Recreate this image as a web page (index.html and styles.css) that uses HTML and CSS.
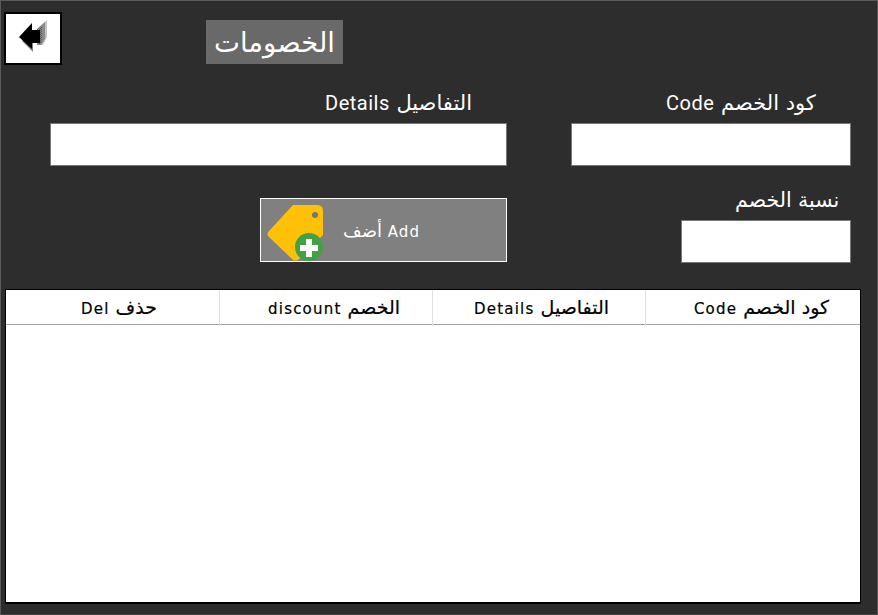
FILE: index.html
```html
<!DOCTYPE html>
<html lang="ar">
<head>
<meta charset="utf-8">
<title>الخصومات</title>
<link rel="stylesheet" href="styles.css">
</head>
<body>
<div class="page">
  <header class="topbar">
    <button class="back" aria-label="back">
      <svg width="34" height="36" viewBox="0 0 34 36">
        <defs>
          <pattern id="dots" width="2" height="2" patternUnits="userSpaceOnUse">
            <rect width="1" height="1" fill="#555"/>
            <rect x="1" y="1" width="1" height="1" fill="#555"/>
          </pattern>
        </defs>
        <polygon points="28,3 28,20 24,28 20,28 20,10" fill="#c4c4c4"/>
        <polygon points="26,5 26,22 22,28 18,28 18,12" fill="#8a8a8a"/>
        <polygon points="23,9 23,25 20,28 16,14" fill="url(#dots)"/>
        <polygon points="3,24 14,13 14,35" fill="#808080"/>
        <polygon points="0,20 13,6 13,13 21,13 21,26 13,26 13,32" fill="#000"/>
      </svg>
    </button>
    <h1 class="title">الخصومات</h1>
  </header>

  <section class="form">
    <div class="field field-details">
      <label class="label label-details">التفاصيل <span class="lat">Details</span></label>
      <input class="input" type="text">
    </div>
    <div class="field field-code">
      <label class="label label-code">كود الخصم <span class="lat">Code</span></label>
      <input class="input" type="text">
    </div>
    <button class="add">
      <svg class="tag" width="64" height="62" viewBox="0 0 64 62">
        <path d="M32 6 H56 Q62 6 62 12 V36 L37 61 Q34 63 31 60 L8 38 Q5 35 8 32 Z" fill="#ffc107"/>
        <circle cx="54" cy="16" r="3" fill="#757575"/>
        <circle cx="48" cy="48" r="14" fill="#43a047"/>
        <path d="M45 40 H51 V46 H57 V52 H51 V58 H45 V52 H39 V46 H45 Z" fill="#fff"/>
      </svg>
      <span class="add-text" dir="rtl"><span class="add-lat">Add</span> أضف</span>
    </button>
    <div class="field field-discount">
      <label class="label label-discount">نسبة الخصم</label>
      <input class="input" type="text">
    </div>
  </section>

  <section class="table">
    <div class="thead">
      <div class="th">حذف <span class="th-lat">Del</span></div>
      <div class="th">الخصم <span class="th-lat">discount</span></div>
      <div class="th">التفاصيل <span class="th-lat">Details</span></div>
      <div class="th">كود الخصم <span class="th-lat">Code</span></div>
    </div>
  </section>
</div>
</body>
</html>
```

FILE: styles.css
```css
* { box-sizing: border-box; }
html, body { margin: 0; padding: 0; }
body {
  width: 878px;
  height: 615px;
  overflow: hidden;
  font-family: "DejaVu Sans", "Liberation Sans", sans-serif;
}
.page {
  width: 878px;
  height: 615px;
  background: #2d2d2d;
  border: 1px solid #5a5a5a;
  border-bottom-color: #444;
  padding: 11px 17px 0 3px;
  display: flex;
  flex-direction: column;
}
.topbar {
  display: flex;
  align-items: flex-start;
  height: 58px;
}
.back {
  width: 58px;
  height: 53px;
  padding: 3px 0 0 13px;
  background: #fff;
  border: 2px solid #000;
  display: flex;
  align-items: flex-start;
}
.title {
  margin: 8px 0 0 144px;
  width: 137px;
  height: 44px;
  background: #696969;
  color: #fff;
  font-size: 27.5px;
  font-weight: 400;
  line-height: 44px;
  text-align: center;
}
.form {
  display: grid;
  grid-template-columns: 457px 280px;
  grid-template-rows: 128px 66px;
  column-gap: 64px;
  margin-left: 46px;
}
.field {
  display: flex;
  flex-direction: column;
  align-items: flex-start;
}
.label {
  direction: rtl;
  color: #fff;
  font-size: 21px;
  line-height: 28px;
  height: 34px;
}
.lat { font-family: Roboto, sans-serif; font-size: 20px; font-weight: 400; letter-spacing: 0.5px; }
.label-details { margin: 19px 0 0 275px; }
.label-code { margin: 19px 0 0 95px; }
.input {
  width: 100%;
  height: 43px;
  background: #fff;
  border: 1px solid #777;
  padding: 0;
  display: block;
}
.field-discount { justify-self: end; width: 170px; margin-top: -12px; }
.label-discount { margin: 0 0 0 54px; height: 34px; font-size: 20.5px; }
.add {
  justify-self: end;
  width: 247px;
  height: 64px;
  background: #808080;
  border: 1px solid #fff;
  padding: 0;
  display: flex;
  align-items: center;
  color: #fff;
  font: inherit;
}
.tag { flex: none; }
.add-text {
  font-size: 18px;
  margin-left: 18px;
}
.add-lat { font-size: 15px; letter-spacing: 1.2px; }
.table {
  width: 856px;
  height: 315px;
  margin-top: 25px;
  margin-left: 1px;
  background: #fff;
  border: 1px solid #000;
  border-bottom-width: 2px;
}
.thead {
  display: grid;
  grid-template-columns: 214px 213px 213px 1fr;
  height: 35px;
  border-bottom: 1px solid #a0a0a0;
}
.th {
  direction: rtl;
  font-size: 19px;
  line-height: 34px;
  color: #000;
  border-right: 1px solid #e0e0e0;
  padding-right: 62px;
  -webkit-text-stroke: 0.2px #000;
}
.th-lat { font-size: 15px; letter-spacing: 1.2px; }
.th:last-child { border-right: none; padding-right: 31px; }
.th:nth-child(2) { padding-right: 32px; }
.th:nth-child(3) { padding-right: 36px; }
```
